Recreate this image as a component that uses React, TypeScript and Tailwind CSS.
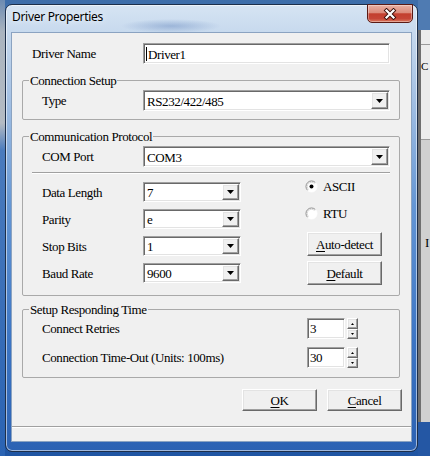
import React from "react";

const sunken =
  "bg-white border border-t-[#a0a0a0] border-l-[#a0a0a0] border-b-white border-r-white shadow-[inset_1px_1px_0_#696969,inset_-1px_-1px_0_#e3e3e3]";
const raised =
  "bg-[#f0f0f0] border border-t-white border-l-white border-b-[#696969] border-r-[#696969] shadow-[inset_-1px_-1px_0_#a0a0a0,inset_1px_1px_0_#e3e3e3]";

function Combo({ value, width }: { value: string; width: string }) {
  return (
    <div className={`${sunken} ${width} h-full p-[1px] flex items-center`}>
      <span className="flex-1 pl-[2px] pt-[1px] leading-none">{value}</span>
      <span className={`${raised} w-[17px] h-full flex items-center justify-center`}>
        <svg width="7" height="4" viewBox="0 0 7 4">
          <path d="M0 0h7L3.5 4z" fill="#000" />
        </svg>
      </span>
    </div>
  );
}

function Group({ title, className, children }: { title: string; className: string; children: React.ReactNode }) {
  return (
    <div className={`mx-[10px] w-[378px] border border-[#a9a9a9] rounded-[2px] ${className}`}>
      <div className="-mt-[8px] ml-[6px] w-fit px-[1px] h-[15px] leading-[15px] bg-[#f0f0f0]">{title}</div>
      {children}
    </div>
  );
}

function Radio({ label, checked }: { label: string; checked?: boolean }) {
  return (
    <div className="h-[13px] flex items-center gap-[5px]">
      <svg width="13" height="13" viewBox="0 0 13 13">
        <circle cx="6.5" cy="6.5" r="5.5" fill="#fff" />
        <path d="M2.6 10.4A5.5 5.5 0 0 1 10.4 2.6" fill="none" stroke="#8a8a8a" />
        <path d="M10.4 2.6A5.5 5.5 0 0 1 2.6 10.4" fill="none" stroke="#ffffff" />
        <path d="M3.5 9.5A4.2 4.2 0 0 1 9.5 3.5" fill="none" stroke="#d8d8d8" />
        {checked && <circle cx="6.5" cy="6.5" r="2" fill="#000" />}
      </svg>
      <span className="leading-none">{label}</span>
    </div>
  );
}

function Button({ children, className }: { children: React.ReactNode; className: string }) {
  return (
    <div className={`${raised} w-[75px] flex items-center justify-center leading-none ${className}`}>{children}</div>
  );
}

function Spin({ value }: { value: string }) {
  return (
    <div className="h-full flex gap-[2px]">
      <div className={`${sunken} w-[38px] h-full pl-[2px] flex items-center leading-none`}>{value}</div>
      <div className="w-[11px] h-full flex flex-col">
        <div className={`${raised} h-[11px] flex items-center justify-center`}>
          <svg width="3" height="2" viewBox="0 0 3 2">
            <path d="M0 2h3L1.5 0z" fill="#000" />
          </svg>
        </div>
        <div className={`${raised} flex-1 flex items-center justify-center`}>
          <svg width="3" height="2" viewBox="0 0 3 2">
            <path d="M0 0h3L1.5 2z" fill="#000" />
          </svg>
        </div>
      </div>
    </div>
  );
}

function FieldRow({ label, children }: { label: string; children: React.ReactNode }) {
  return (
    <div className="h-[20px] flex items-center pl-[19px]">
      <span className="w-[101px] leading-none">{label}</span>
      {children}
    </div>
  );
}

export default function App() {
  return (
    <div className="w-[430px] h-[456px] overflow-hidden flex bg-[linear-gradient(180deg,#3e6eaa_0%,#2d63ad_40%,#1f55a3_100%)] [font-family:Liberation_Serif,Times_New_Roman,serif] text-[13px] tracking-[-0.4px] text-black">
      <div className="shrink-0 w-[5px] h-full bg-[linear-gradient(180deg,#6c8bb2_0%,#aab4bf_7%,#b4bbc3_27%,#4a7bbd_33%,#2a63b3_100%)]" />

      <div className="shrink-0 mt-[4px] w-[413px] h-[448px] flex flex-col rounded-[7px] border border-[#1d2f4a] bg-[linear-gradient(180deg,#d6e4f3_0%,#c5d8ed_7%,#a6c2e4_20%,#6496d4_45%,#3c75c4_75%,#2c62b3_100%)] shadow-[inset_0_0_0_1px_rgba(255,255,255,0.55)]">
        <div className="h-[27px] flex items-start justify-between pl-[6px] pr-[4px] bg-[radial-gradient(ellipse_50px_7px_at_165px_21px,rgba(70,110,175,0.35),transparent)]">
          <span className="pt-[4px] leading-[16px] [font-family:Noto_Sans,sans-serif] text-[12px] tracking-[-0.3px] [text-shadow:0_0_6px_#fff]">
            Driver Properties
          </span>
          <div className="-mt-[1px] w-[46px] h-[19px] rounded-b-[5px] rounded-tl-[1px] border border-[#5a1a14] bg-[linear-gradient(180deg,#eab0a2_0%,#dc8b7b_45%,#c33f2e_52%,#c64637_80%,#da7a60_100%)] shadow-[inset_0_0_0_1px_rgba(255,255,255,0.35)] flex items-center justify-center">
            <svg width="14" height="12" viewBox="0 0 14 12">
              <path d="M3.5 2.5L10.5 9.5M10.5 2.5L3.5 9.5" stroke="#3a0f0a" strokeWidth="4" strokeLinecap="square" />
              <path d="M3.5 2.5L10.5 9.5M10.5 2.5L3.5 9.5" stroke="#fff" strokeWidth="2.2" strokeLinecap="square" />
            </svg>
          </div>
        </div>

        <div className="mx-[5px] w-[401px] h-[410px] bg-[#f0f0f0] border border-[#8ba3c1] flex flex-col">
          <div className="mt-[10px] h-[21px] flex items-center pl-[20px]">
            <span className="w-[111px] leading-none">Driver Name</span>
            <div className={`${sunken} w-[247px] h-full pl-[2px] flex items-center`}>
              <span className="w-[1px] h-[14px] bg-black mr-[1px]" />
              <span className="leading-none pt-[1px]">Driver1</span>
            </div>
          </div>

          <Group title="Connection Setup" className="mt-[16px] pb-[8px]">
            <div className="mt-[2px] h-[21px] flex items-center pl-[19px]">
              <span className="w-[101px] leading-none">Type</span>
              <Combo value="RS232/422/485" width="w-[247px]" />
            </div>
          </Group>

          <Group title="Communication Protocol" className="mt-[16px] pb-[10px]">
            <div className="mt-[2px] h-[21px] flex items-center pl-[19px]">
              <span className="w-[101px] leading-none">COM Port</span>
              <Combo value="COM3" width="w-[247px]" />
            </div>
            <div className="mt-[5px] ml-[9px] w-[358px] h-[2px] border-t border-t-[#a0a0a0] border-b border-b-white" />
            <div className="mt-[8px] flex items-start">
              <div className="w-[218px] flex flex-col gap-[7px]">
                <FieldRow label="Data Length">
                  <Combo value="7" width="w-[98px]" />
                </FieldRow>
                <FieldRow label="Parity">
                  <Combo value="e" width="w-[98px]" />
                </FieldRow>
                <FieldRow label="Stop Bits">
                  <Combo value="1" width="w-[98px]" />
                </FieldRow>
                <FieldRow label="Baud Rate">
                  <Combo value="9600" width="w-[98px]" />
                </FieldRow>
              </div>
              <div className="ml-[64px] -mt-[2px] flex flex-col">
                <Radio label="ASCII" checked />
                <div className="mt-[14px]">
                  <Radio label="RTU" />
                </div>
                <Button className="mt-[12px] ml-[2px] h-[24px]">
                  <span>
                    <span className="underline underline-offset-2">A</span>uto-detect
                  </span>
                </Button>
                <Button className="mt-[5px] ml-[2px] h-[24px]">
                  <span>
                    <span className="underline underline-offset-2">D</span>efault
                  </span>
                </Button>
              </div>
            </div>
          </Group>

          <Group title="Setup Responding Time" className="mt-[13px] pb-[9px]">
            <div className="mt-[1px] h-[21px] flex items-center pl-[19px]">
              <span className="w-[265px] leading-none">Connect Retries</span>
              <Spin value="3" />
            </div>
            <div className="mt-[8px] h-[21px] flex items-center pl-[19px]">
              <span className="w-[265px] leading-none">Connection Time-Out (Units: 100ms)</span>
              <Spin value="30" />
            </div>
          </Group>

          <div className="mt-[11px] h-[22px] flex justify-end gap-[10px] pr-[9px]">
            <Button className="h-full">
              <span>
                <span className="underline underline-offset-2">O</span>K
              </span>
            </Button>
            <Button className="h-full">
              <span>
                <span className="underline underline-offset-2">C</span>ancel
              </span>
            </Button>
          </div>

          <div className="mt-[15px] h-[2px] border-t border-t-[#a0a0a0] border-b border-b-white" />
          <div className="flex-1" />
        </div>
      </div>

      <div className="flex-1 min-w-0 h-full flex flex-col">
        <div className="h-[30px] bg-[#4f7bb2]" />
        <div className="h-[110px] flex">
          <div className="shrink-0 w-[3px] bg-[#6f6f6f]" />
          <div className="flex-1 min-w-0 flex flex-col bg-[#ececec]">
            <div className="h-[14px]" />
            <div className="h-[1px] bg-[#9a9a9a]" />
            <div className="h-[20px] pt-[16px] text-[11px] tracking-normal leading-none">C</div>
            <div className="flex-1" />
            <div className="h-[1px] bg-[#9a9a9a]" />
          </div>
        </div>
        <div className="flex-1 flex">
          <div className="shrink-0 w-[3px] bg-[#6f6f6f]" />
          <div className="flex-1 min-w-0 bg-[#d0d0d0] flex flex-col">
            <div className="h-[96px]" />
            <div className="pl-[4px] leading-none">I</div>
          </div>
        </div>
        <div className="h-[34px] bg-[#2457a4]" />
      </div>
    </div>
  );
}
